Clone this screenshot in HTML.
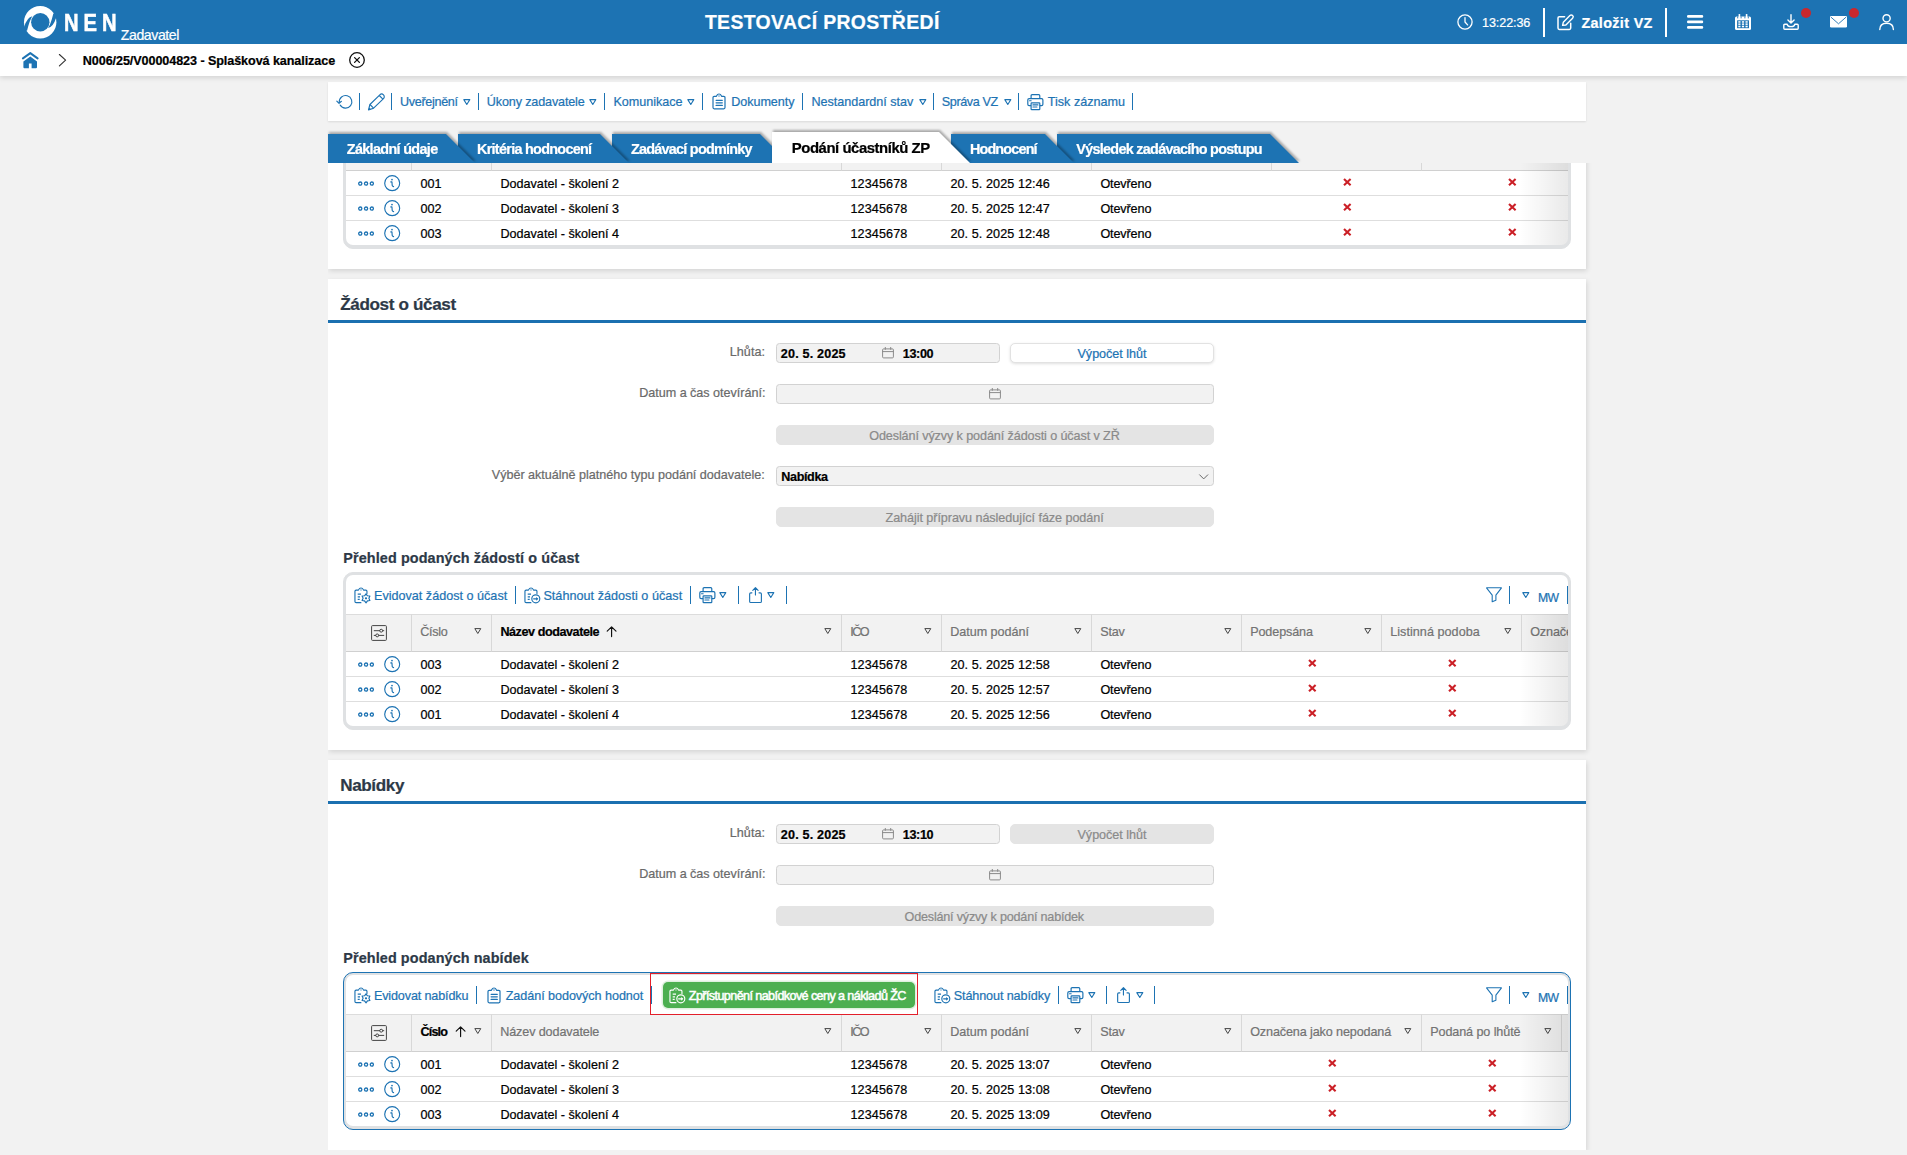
<!DOCTYPE html>
<html lang="cs">
<head>
<meta charset="utf-8">
<title>NEN – Zadavatel – Podání účastníků ZP</title>
<style>
*{box-sizing:border-box;margin:0;padding:0}
html,body{width:1907px;height:1155px;overflow:hidden}
body{position:relative;background:#f2f2f2;font:400 12.6px/1 "Liberation Sans",sans-serif;color:#000}
h1,h2,h3{font-weight:700;margin:0}
button{font:inherit;border:0;background:none;display:block;text-align:left}
.t{position:absolute;line-height:1;white-space:pre;font-family:"Liberation Sans",sans-serif;-webkit-text-stroke:.22px currentColor}
.f-nen{-webkit-text-stroke:.55px currentColor}
.f-gb{-webkit-text-stroke:.5px currentColor}
.i{position:absolute;display:block;overflow:visible}
.a{position:absolute}
.sep{position:absolute;display:block}
.f-r{font-weight:400;font-size:12.6px}
.f-b{font-weight:700;font-size:12.6px}
.f-mw{font-weight:400;font-size:12.2px}
.f-zad{font-weight:400;font-size:14.1px}
.f-nen{font-weight:700;font-size:24px}
.f-ttl{font-weight:700;font-size:19.4px}
.f-zvz{font-weight:700;font-size:14.4px}
.f-tab{font-weight:700;font-size:14.4px}
.f-taba{font-weight:700;font-size:14.9px}
.f-h2{font-weight:700;font-size:17.1px}
.f-h3{font-weight:700;font-size:14.4px}
.f-gb{font-weight:400;font-size:12.6px}
.top{position:absolute;left:0;top:0;width:1907px;height:44px;background:#1d73b3;z-index:5}
.crumbs{position:absolute;left:0;top:44px;width:1907px;height:32px;background:#fff;box-shadow:0 2px 5px rgba(0,0,0,.13);z-index:4}
.maintb{position:absolute;left:328px;top:82px;width:1258px;height:39px;background:#fff;box-shadow:0 1px 2px rgba(0,0,0,.10)}
.tabs{position:absolute;left:328px;top:128px;width:1258px;height:35px;z-index:3}
.tabw{position:absolute;filter:drop-shadow(1.5px -1.5px 1px rgba(0,0,0,.30))}
.tab{display:block;position:relative;background:#1d73b3}
.tab.act{background:#fff}
.scroll{position:absolute;left:328px;top:163px;width:1266px;height:987px;overflow:hidden}
.panel{position:absolute;left:0;width:1258px;background:#fff;box-shadow:1px 2px 5px rgba(0,0,0,.125)}
.rule{background:#1b70b0}
.inp{background:#f2f2f2;border:1px solid #d2d2d2;border-radius:3.5px}
.inp>.t,.inp>.i,.btn>.t{margin:-1px 0 0 -1px}
.btn{background:#fff;border:1px solid #e2e2e2;border-radius:5px;box-shadow:0 1px 3px rgba(0,0,0,.13)}
.btn.dis{background:#e4e4e4;border-color:#e4e4e4;box-shadow:none}
.frame{position:absolute;left:15px;width:1228px;height:157.6px;border:1px solid #dfe1e3;padding:2px;border-radius:10px;background:#dfe1e3}
.frame.focus{border-color:#1d73b3}
.finner{position:relative;width:1222px;height:151px;background:#fff;border-radius:7px;overflow:hidden}
.gtb{position:relative;height:39px}
.gscroll{position:relative;width:1222px;height:112px;overflow:hidden}
.grid{border-collapse:separate;border-spacing:0;table-layout:fixed}
.grid th,.grid td{position:relative;padding:0;font-weight:400}
.grid th{height:38px;background:#f2f2f2;border-top:1px solid #dcdcdc;border-bottom:1px solid #d0d0d0;border-right:1px solid #d8d8d8}
.grid td{height:25px;border-bottom:1px solid #dedede}
.grid tr:last-child td{border-bottom:0;height:24px}
.fade{position:absolute;right:0;top:0;width:48px;height:112px;background:linear-gradient(90deg,rgba(0,0,0,0),rgba(0,0,0,.088))}
.gbtn{background:#4caf50;border-radius:5px;box-shadow:0 0 0 1.5px rgba(76,175,80,.18)}
.mark{border:1px solid #e3202b;z-index:2}

</style>
</head>
<body>
<header class="top">
<svg class="i" style="left:23.7px;top:5.7px" width="32.4" height="32.4" viewBox="0 0 32.4 32.4"><circle cx="16.2" cy="16.2" r="16.2" fill="#fff"/><path d="M0 21.3Q3.2 11 8.4 10.3Q5.7 13.85 3.05 24.8L0.6 24.6Z" fill="#1d73b3"/><path d="M32.40 11.10Q29.20 21.40 24.00 22.10Q26.70 18.55 29.35 7.60L31.80 7.80Z" fill="#1d73b3"/><circle cx="16.3" cy="16.2" r="9.2" fill="#1d73b3"/></svg>
<span class="t f-nen" style="left:64.3px;top:11px;letter-spacing:5.974px;color:#fff;transform:scaleX(0.84);transform-origin:0 0">NEN</span>
<span class="t f-zad" style="left:120.8px;top:28px;letter-spacing:-0.413px;color:#fff">Zadavatel</span>
<h1 class="t f-ttl" style="left:704.9px;top:13px;letter-spacing:0.372px;color:#fff">TESTOVACÍ PROSTŘEDÍ</h1>
<svg class="i" style="left:1457.4px;top:14.2px" width="16.0" height="16.0" viewBox="0 0 16 16"><circle cx="8" cy="8" r="7.1" fill="none" stroke="#fff" stroke-width="1.3"/><path d="M8 3.6V8L10.6 10.9" fill="none" stroke="#fff" stroke-width="1.3" stroke-linecap="round" stroke-linejoin="round"/></svg>
<span class="t f-r" style="left:1482.1px;top:17px;letter-spacing:-0.119px;color:#fff">13:22:36</span>
<i class="sep" style="left:1543.0px;top:8.2px;height:28.6px;width:2.0px;background:#fff"></i>
<svg class="i" style="left:1557.0px;top:13.8px" width="17.0" height="16.5" viewBox="0 0 17 16.5"><path d="M7.6 2.7H2.3Q1 2.7 1 4V14.1Q1 15.4 2.3 15.4H12.4Q13.7 15.4 13.7 14.1V9.2" fill="none" stroke="#fff" stroke-width="1.5" stroke-linecap="round"/><path d="M5.6 11.4L6.3 8.3L12.9 1.6A1.9 1.9 0 0 1 15.6 4.3L8.9 11Z" fill="none" stroke="#fff" stroke-width="1.4" stroke-linejoin="round"/></svg>
<span class="t f-zvz" style="left:1581.4px;top:16px;letter-spacing:0.337px;color:#fff">Založit VZ</span>
<i class="sep" style="left:1665.0px;top:8.2px;height:28.6px;width:2.0px;background:#fff"></i>
<svg class="i" style="left:1686.9px;top:15.1px" width="16.2" height="14.0" viewBox="0 0 16.2 14"><rect x="0" y="0" width="16.2" height="2.8" rx="1.2" fill="#fff"/><rect x="0" y="5.5" width="16.2" height="2.8" rx="1.2" fill="#fff"/><rect x="0" y="11" width="16.2" height="2.8" rx="1.2" fill="#fff"/></svg>
<svg class="i" style="left:1735.0px;top:14.1px" width="16.0" height="16.0" viewBox="0 0 16 16"><rect x="0" y="2.4" width="16" height="13.6" rx="1.5" fill="#fff"/><rect x="3.6" y="0" width="1.6" height="4" rx="0.6" fill="#fff"/><rect x="10.8" y="0" width="1.6" height="4" rx="0.6" fill="#fff"/><path d="M2.7 2.4V4.4M6.1 2.4V4.4M9.9 2.4V4.4M13.3 2.4V4.4" stroke="#1d73b3" stroke-width="0.9"/><rect x="2.1" y="6.3" width="11.9" height="7.9" fill="#1d73b3"/><rect x="3.3" y="7.2" width="2.2" height="1.5" fill="#fff"/><rect x="6.9" y="7.2" width="2.2" height="1.5" fill="#fff"/><rect x="10.5" y="7.2" width="2.2" height="1.5" fill="#fff"/><rect x="3.3" y="9.4" width="2.2" height="1.5" fill="#fff"/><rect x="6.9" y="9.4" width="2.2" height="1.5" fill="#fff"/><rect x="10.5" y="9.4" width="2.2" height="1.5" fill="#fff"/><rect x="3.3" y="11.7" width="2.2" height="1.6" fill="#fff"/><rect x="6.9" y="11.7" width="2.2" height="1.6" fill="#fff"/><rect x="10.5" y="11.7" width="2.2" height="1.6" fill="#fff"/></svg>
<svg class="i" style="left:1782.8px;top:14.1px" width="16.0" height="16.0" viewBox="0 0 16 16"><path d="M8 0.7V8.8M4.9 5.9L8 9L11.1 5.9" fill="none" stroke="#fff" stroke-width="1.4" stroke-linecap="round" stroke-linejoin="round"/><path d="M4.2 10.3H1.8Q0.8 10.3 0.8 11.3V14.2Q0.8 15.2 1.8 15.2H14.2Q15.2 15.2 15.2 14.2V11.3Q15.2 10.3 14.2 10.3H11.8C11.5 12 10 12.6 8 12.6C6 12.6 4.5 12 4.2 10.3Z" fill="none" stroke="#fff" stroke-width="1.4" stroke-linejoin="round"/></svg>
<span class="i" style="left:1801.0px;top:8.0px;width:10.0px;height:10.0px;border-radius:50%;background:#c9282d"></span>
<svg class="i" style="left:1830.0px;top:16.0px" width="17.0" height="11.6" viewBox="0 0 17 11.6"><rect x="0" y="0" width="17" height="11.6" rx="1.3" fill="#fff"/><path d="M1 1.2L8.5 7.8L16 1.2" fill="none" stroke="#1d73b3" stroke-width="0.9" stroke-linejoin="round"/></svg>
<span class="i" style="left:1849.0px;top:8.0px;width:10.0px;height:10.0px;border-radius:50%;background:#c9282d"></span>
<svg class="i" style="left:1879.0px;top:14.1px" width="15.2" height="16.0" viewBox="0 0 15.2 16"><circle cx="7.6" cy="4.3" r="3.6" fill="none" stroke="#fff" stroke-width="1.4"/><path d="M0.8 15.6C0.8 11.4 3.6 9.3 7.6 9.3C11.6 9.3 14.4 11.4 14.4 15.6" fill="none" stroke="#fff" stroke-width="1.4" stroke-linecap="round"/></svg>
</header>
<nav class="crumbs">
<svg class="i" style="left:22.0px;top:7.8px" width="16.5" height="16.5" viewBox="0 0 16.5 16.5"><path d="M0.9 6.4L8.3 1.1L15.6 6.4" fill="none" stroke="#1d73b3" stroke-width="2" stroke-linecap="round" stroke-linejoin="round"/><path d="M8.3 4.6L15 9.6V15.2Q15 16.2 14 16.2H9.6V11.5H6.9V16.2H2.4Q1.4 16.2 1.4 15.2V9.6Z" fill="#1d73b3"/></svg>
<svg class="i" style="left:59.0px;top:9.9px" width="7.2" height="12.4" viewBox="0 0 7.2 12.4"><path d="M0.4 0.5L6.6 6.2L0.4 11.9" fill="none" stroke="#333" stroke-width="1.15" stroke-linecap="round" stroke-linejoin="round"/></svg>
<span class="t f-b" style="left:82.8px;top:11px;letter-spacing:-0.081px;color:#000">N006/25/V00004823 - Splašková kanalizace</span>
<svg class="i" style="left:348.8px;top:7.9px" width="16.0" height="16.0" viewBox="0 0 16 16"><circle cx="8" cy="8" r="7.3" fill="none" stroke="#111" stroke-width="1.3"/><path d="M5.6 5.6L10.4 10.4M10.4 5.6L5.6 10.4" stroke="#111" stroke-width="1.3" stroke-linecap="round"/></svg>
</nav>
<div class="maintb" role="toolbar">
<svg class="i" style="left:7.5px;top:12.0px" width="17.0" height="16.0" viewBox="0 0 17 16"><path d="M4.2 11.1A6.3 6.3 0 1 0 3.3 8.4" fill="none" stroke="#1d73b3" stroke-width="1.15" stroke-linecap="round"/><path d="M0.8 7.1L3.05 9.4L5.4 7.3" fill="none" stroke="#1d73b3" stroke-width="1.15" stroke-linecap="round" stroke-linejoin="round"/></svg>
<i class="sep" style="left:30.7px;top:11.2px;height:17.0px;width:1.2px;background:#1d73b3"></i>
<svg class="i" style="left:40.0px;top:11.6px" width="16.6" height="16.6" viewBox="0 0 16.6 16.6"><path d="M0.5 15.9L1.92 10.5L11.82 0.9A2.6 2.6 0 0 1 15.5 4.58L5.6 14.2Z" fill="none" stroke="#1d73b3" stroke-width="1.15" stroke-linejoin="round"/><path d="M1.92 10.5L5.6 14.2M11.3 1.5L14.9 5.1" fill="none" stroke="#1d73b3" stroke-width="1.1"/><path d="M0.5 15.9L1.1 13.4L3 15.3Z" fill="#1d73b3"/></svg>
<i class="sep" style="left:62.8px;top:11.2px;height:17.0px;width:1.2px;background:#1d73b3"></i>
<span class="t f-r" style="left:72.0px;top:14px;letter-spacing:-0.323px;color:#1d73b3">Uveřejnění</span>
<svg class="i" style="left:135.3px;top:16.6px" width="7.6" height="6.2" viewBox="0 0 7.6 6.2"><path d="M0.8 0.6H6.8L3.8 5.5Z" fill="none" stroke="#1d73b3" stroke-width="1.1" stroke-linejoin="round"/></svg>
<i class="sep" style="left:149.8px;top:11.2px;height:17.0px;width:1.2px;background:#1d73b3"></i>
<span class="t f-r" style="left:158.8px;top:14px;letter-spacing:-0.142px;color:#1d73b3">Úkony zadavatele</span>
<svg class="i" style="left:261.4px;top:16.6px" width="7.6" height="6.2" viewBox="0 0 7.6 6.2"><path d="M0.8 0.6H6.8L3.8 5.5Z" fill="none" stroke="#1d73b3" stroke-width="1.1" stroke-linejoin="round"/></svg>
<i class="sep" style="left:275.8px;top:11.2px;height:17.0px;width:1.2px;background:#1d73b3"></i>
<span class="t f-r" style="left:285.5px;top:14px;letter-spacing:-0.035px;color:#1d73b3">Komunikace</span>
<svg class="i" style="left:359.4px;top:16.6px" width="7.6" height="6.2" viewBox="0 0 7.6 6.2"><path d="M0.8 0.6H6.8L3.8 5.5Z" fill="none" stroke="#1d73b3" stroke-width="1.1" stroke-linejoin="round"/></svg>
<i class="sep" style="left:373.8px;top:11.2px;height:17.0px;width:1.2px;background:#1d73b3"></i>
<svg class="i" style="left:384.4px;top:11.4px" width="14.0" height="17.0" viewBox="0 0 14 17"><path d="M4.3 3.4H2.2Q1 3.4 1 4.6V14.6Q1 15.8 2.2 15.8H11.8Q13 15.8 13 14.6V4.6Q13 3.4 11.8 3.4H9.7C9.2 3.4 9.3 1 7 1C4.7 1 4.8 3.4 4.3 3.4Z" fill="none" stroke="#1d73b3" stroke-width="1.2" stroke-linejoin="round"/><circle cx="7" cy="3" r="0.65" fill="#1d73b3"/><path d="M4.1 7.3H10.3M4.1 9.85H10.3M4.1 12.4H10.3" stroke="#1d73b3" stroke-width="1.25" stroke-linecap="round"/></svg>
<span class="t f-r" style="left:403.3px;top:14px;letter-spacing:-0.063px;color:#1d73b3">Dokumenty</span>
<i class="sep" style="left:473.7px;top:11.2px;height:17.0px;width:1.2px;background:#1d73b3"></i>
<span class="t f-r" style="left:483.4px;top:14px;letter-spacing:-0.014px;color:#1d73b3">Nestandardní stav</span>
<svg class="i" style="left:590.7px;top:16.6px" width="7.6" height="6.2" viewBox="0 0 7.6 6.2"><path d="M0.8 0.6H6.8L3.8 5.5Z" fill="none" stroke="#1d73b3" stroke-width="1.1" stroke-linejoin="round"/></svg>
<i class="sep" style="left:604.8px;top:11.2px;height:17.0px;width:1.2px;background:#1d73b3"></i>
<span class="t f-r" style="left:613.8px;top:14px;letter-spacing:-0.388px;color:#1d73b3">Správa VZ</span>
<svg class="i" style="left:675.6px;top:16.6px" width="7.6" height="6.2" viewBox="0 0 7.6 6.2"><path d="M0.8 0.6H6.8L3.8 5.5Z" fill="none" stroke="#1d73b3" stroke-width="1.1" stroke-linejoin="round"/></svg>
<i class="sep" style="left:690.0px;top:11.2px;height:17.0px;width:1.2px;background:#1d73b3"></i>
<svg class="i" style="left:698.7px;top:11.7px" width="16.7" height="16.5" viewBox="0 0 16.7 16.5"><path d="M4.1 4.5V1.7Q4.1 0.7 5.1 0.7H11.8Q12.8 0.7 12.8 1.7V4.5" fill="none" stroke="#1d73b3" stroke-width="1.2"/><path d="M4.1 11.6H2.1Q0.8 11.6 0.8 10.3V6Q0.8 4.7 2.1 4.7H14.6Q15.9 4.7 15.9 6V10.3Q15.9 11.6 14.6 11.6H12.8" fill="none" stroke="#1d73b3" stroke-width="1.2"/><rect x="4.1" y="8.9" width="8.7" height="6.8" rx="0.7" fill="none" stroke="#1d73b3" stroke-width="1.2"/><path d="M2.5 6.8H4.2M5.9 10.9H11M5.9 13H10" stroke="#1d73b3" stroke-width="1.05" stroke-linecap="round"/></svg>
<span class="t f-r" style="left:719.8px;top:14px;letter-spacing:-0.002px;color:#1d73b3">Tisk záznamu</span>
<i class="sep" style="left:803.9px;top:11.2px;height:17.0px;width:1.2px;background:#1d73b3"></i>
</div>
<div class="tabs" role="tablist">
<div class="tabw" style="left:0px;top:6px;z-index:10"><a class="tab" style="width:147px;height:29px;clip-path:polygon(0 0,118px 0,100% 100%,0 100%)"><span class="t f-tab" style="left:18.8px;top:8px;letter-spacing:-0.659px;color:#fff">Základní údaje</span></a></div>
<div class="tabw" style="left:130px;top:6px;z-index:9"><a class="tab" style="width:171px;height:29px;clip-path:polygon(0 0,142px 0,100% 100%,0 100%)"><span class="t f-tab" style="left:19.0px;top:8px;letter-spacing:-0.708px;color:#fff">Kritéria hodnocení</span></a></div>
<div class="tabw" style="left:284px;top:6px;z-index:8"><a class="tab" style="width:177px;height:29px;clip-path:polygon(0 0,148px 0,100% 100%,0 100%)"><span class="t f-tab" style="left:19.0px;top:8px;letter-spacing:-0.748px;color:#fff">Zadávací podmínky</span></a></div>
<div class="tabw" style="left:444px;top:4px;z-index:20"><a class="tab act" style="width:198px;height:31px;clip-path:polygon(0 0,167px 0,100% 100%,0 100%)"><span class="t f-taba" style="left:19.8px;top:9px;letter-spacing:-0.447px;color:#000">Podání účastníků ZP</span></a></div>
<div class="tabw" style="left:623px;top:6px;z-index:6"><a class="tab" style="width:123px;height:29px;clip-path:polygon(0 0,94px 0,100% 100%,0 100%)"><span class="t f-tab" style="left:18.9px;top:8px;letter-spacing:-0.832px;color:#fff">Hodnocení</span></a></div>
<div class="tabw" style="left:729px;top:6px;z-index:5"><a class="tab" style="width:242px;height:29px;clip-path:polygon(0 0,213px 0,100% 100%,0 100%)"><span class="t f-tab" style="left:19.3px;top:8px;letter-spacing:-0.709px;color:#fff">Výsledek zadávacího postupu</span></a></div>
</div>
<main class="scroll">
<section class="panel" style="top:-365.0px;height:471.0px">
<h2 class="t f-h2" style="left:12.2px;top:17px;color:#2d3947">Předběžná nabídka</h2>
<div class="a rule" style="left:0.0px;top:41.0px;width:1258.0px;height:3.0px"></div>
<label class="t f-r" style="left:401.7px;top:67px;letter-spacing:0.077px;color:#6a6a6a">Lhůta:</label>
<div class="a inp" style="left:448.0px;top:64.4px;width:223.6px;height:20.0px"><span class="t f-b" style="left:4.8px;top:4.60px;letter-spacing:0.177px;color:#000">20. 5. 2025</span>
<svg class="i" style="left:106.0px;top:3.9px" width="12.0" height="11.5" viewBox="0 0 12 11.5"><rect x="0.6" y="1.9" width="10.8" height="9" rx="1" fill="none" stroke="#8a8a8a" stroke-width="1"/><path d="M0.6 4.6H11.4M3.3 0.4V2.4M8.7 0.4V2.4" stroke="#8a8a8a" stroke-width="1" stroke-linecap="round"/></svg>
<span class="t f-b" style="left:126.8px;top:4.60px;letter-spacing:-0.355px;color:#000">12:50</span></div>
<button class="a btn" style="left:682.3px;top:64.4px;width:203.3px;height:19.4px"><span class="t f-r" style="left:67.2px;top:4.60px;letter-spacing:-0.028px;color:#1d73b3">Výpočet lhůt</span></button>
<label class="t f-r" style="left:311.2px;top:108px;letter-spacing:-0.024px;color:#6a6a6a">Datum a čas otevírání:</label>
<div class="a inp" style="left:448.0px;top:105.4px;width:437.6px;height:20.0px"><svg class="i" style="left:213.0px;top:3.9px" width="12.0" height="11.5" viewBox="0 0 12 11.5"><rect x="0.6" y="1.9" width="10.8" height="9" rx="1" fill="none" stroke="#8a8a8a" stroke-width="1"/><path d="M0.6 4.6H11.4M3.3 0.4V2.4M8.7 0.4V2.4" stroke="#8a8a8a" stroke-width="1" stroke-linecap="round"/></svg></div>
<button class="a btn dis" style="left:448.0px;top:146.4px;width:437.6px;height:20.0px"><span class="t f-r" style="left:93.2px;top:4.60px;color:#8a8a8a">Odeslání výzvy k podání předběžných nabídek</span></button>
<label class="t f-r" style="left:163.8px;top:190px;letter-spacing:-0.017px;color:#6a6a6a">Výběr aktuálně platného typu podání dodavatele:</label>
<div class="a inp" style="left:448.0px;top:187.4px;width:437.6px;height:20.0px"><span class="t f-b" style="left:5.3px;top:4.60px;letter-spacing:-0.367px;color:#000">Nabídka</span>
<svg class="i" style="left:422.6px;top:7.4px" width="9.4" height="5.8" viewBox="0 0 9.4 5.8"><path d="M0.6 0.8L4.7 4.9L8.8 0.8" fill="none" stroke="#666" stroke-width="1" stroke-linecap="round" stroke-linejoin="round"/></svg></div>
<button class="a btn dis" style="left:448.0px;top:228.4px;width:437.6px;height:20.0px"><span class="t f-r" style="left:109.5px;top:4.60px;letter-spacing:-0.060px;color:#8a8a8a">Zahájit přípravu následující fáze podání</span></button>
<h3 class="t f-h3" style="left:15.3px;top:272px;color:#2d3947">Přehled podaných předběžných nabídek</h3>
<div class="frame" style="top:293.4px"><div class="finner"><div class="gtb" role="toolbar"><svg class="i" style="left:7.6px;top:11.2px" width="17.0" height="17.0" viewBox="0 0 17 17"><path d="M6.9 15.65H2.1Q0.95 15.65 0.95 14.5V4.3Q0.95 3.15 2.1 3.15H4.3C4.8 3.15 4.7 0.95 7 0.95C9.3 0.95 9.2 3.15 9.7 3.15H11.8Q12.95 3.15 12.95 4.3V6.5" fill="none" stroke="#1d73b3" stroke-width="1.15" stroke-linecap="round" stroke-linejoin="round"/><circle cx="7" cy="2.9" r="0.6" fill="#1d73b3"/><path d="M3.7 7.1H7M3.7 9.8H6M3.7 12.4H5.7" stroke="#1d73b3" stroke-width="1.25" stroke-linecap="butt"/><path d="M12.00 6.80L13.45 8.79L15.90 9.05L14.90 11.30L15.90 13.55L13.45 13.81L12.00 15.80L10.55 13.81L8.10 13.55L9.10 11.30L8.10 9.05L10.55 8.79Z" fill="none" stroke="#1d73b3" stroke-width="1.15" stroke-linejoin="round"/><circle cx="12.0" cy="11.3" r="1.15" fill="#1d73b3"/></svg>
<span class="t f-r" style="left:28.0px;top:14.60px;color:#1d73b3">Evidovat předběžnou nabídku</span>
<svg class="i" style="left:1139.9px;top:11.9px" width="16.0" height="15.3" viewBox="0 0 16 15.3"><path d="M0.9 0.7H15.1Q15.6 0.7 15.3 1.2L9.9 8.2V13.2L6.2 14.7V8.2L0.7 1.2Q0.4 0.7 0.9 0.7Z" fill="none" stroke="#1d73b3" stroke-width="1.1" stroke-linejoin="round"/></svg>
<i class="sep" style="left:1163.0px;top:10.8px;height:17.4px;width:1.2px;background:#1d73b3"></i>
<svg class="i" style="left:1175.8px;top:16.8px" width="7.6" height="6.2" viewBox="0 0 7.6 6.2"><path d="M0.8 0.6H6.8L3.8 5.5Z" fill="none" stroke="#1d73b3" stroke-width="1.1" stroke-linejoin="round"/></svg>
<span class="t f-mw" style="left:1192.0px;top:16.60px;letter-spacing:-0.656px;color:#1d73b3">MW</span>
<i class="sep" style="left:1220.6px;top:10.8px;height:17.4px;width:1.6px;background:#1d73b3"></i></div><div class="gscroll"><table class="grid" style="width:1256px"><thead><tr><th style="width:66px"><svg class="i" style="left:24.9px;top:9.6px" width="16.0" height="16.0" viewBox="0 0 16 16"><rect x="0.6" y="0.6" width="14.8" height="14.8" rx="0.9" fill="none" stroke="#444" stroke-width="1"/><path d="M3.2 5.7H8.6M11.8 5.7H12.8M3.2 10.4H4.6M7.8 10.4H12.8" stroke="#444" stroke-width="1" stroke-linecap="round"/><circle cx="10.2" cy="5.7" r="1.45" fill="none" stroke="#444" stroke-width="1"/><circle cx="6.2" cy="10.4" r="1.45" fill="none" stroke="#444" stroke-width="1"/></svg></th><th style="width:80px"><span class="t f-b" style="left:8.4px;top:10.60px;letter-spacing:-0.799px;color:#000">Číslo</span>
<svg class="i" style="left:42.6px;top:10.2px" width="11.2" height="11.4" viewBox="0 0 11.2 11.4"><path d="M5.6 10.6V0.8M1.2 5.2L5.6 0.8L10 5.2" fill="none" stroke="#111" stroke-width="1.15" stroke-linecap="round" stroke-linejoin="round"/></svg>
<svg class="i" style="left:62.4px;top:12.6px" width="7.6" height="6.2" viewBox="0 0 7.6 6.2"><path d="M0.8 0.6H6.8L3.8 5.5Z" fill="none" stroke="#444" stroke-width="1" stroke-linejoin="round"/></svg></th><th style="width:350px"><span class="t f-r" style="left:8.2px;top:10.60px;letter-spacing:-0.109px;color:#737373">Název dodavatele</span>
<svg class="i" style="left:332.4px;top:12.6px" width="7.6" height="6.2" viewBox="0 0 7.6 6.2"><path d="M0.8 0.6H6.8L3.8 5.5Z" fill="none" stroke="#444" stroke-width="1" stroke-linejoin="round"/></svg></th><th style="width:100px"><span class="t f-r" style="left:8.2px;top:10.60px;letter-spacing:-1.495px;color:#737373">IČO</span>
<svg class="i" style="left:82.4px;top:12.6px" width="7.6" height="6.2" viewBox="0 0 7.6 6.2"><path d="M0.8 0.6H6.8L3.8 5.5Z" fill="none" stroke="#444" stroke-width="1" stroke-linejoin="round"/></svg></th><th style="width:150px"><span class="t f-r" style="left:8.2px;top:10.60px;letter-spacing:-0.030px;color:#737373">Datum podání</span>
<svg class="i" style="left:132.4px;top:12.6px" width="7.6" height="6.2" viewBox="0 0 7.6 6.2"><path d="M0.8 0.6H6.8L3.8 5.5Z" fill="none" stroke="#444" stroke-width="1" stroke-linejoin="round"/></svg></th><th style="width:180px"><span class="t f-r" style="left:8.2px;top:10.60px;letter-spacing:-0.201px;color:#737373">Stav</span>
<svg class="i" style="left:162.4px;top:12.6px" width="7.6" height="6.2" viewBox="0 0 7.6 6.2"><path d="M0.8 0.6H6.8L3.8 5.5Z" fill="none" stroke="#444" stroke-width="1" stroke-linejoin="round"/></svg></th><th style="width:150px"><span class="t f-r" style="left:8.2px;top:10.60px;letter-spacing:-2.550px;color:#737373">Označena jako nepodaná</span>
<svg class="i" style="left:132.4px;top:12.6px" width="7.6" height="6.2" viewBox="0 0 7.6 6.2"><path d="M0.8 0.6H6.8L3.8 5.5Z" fill="none" stroke="#444" stroke-width="1" stroke-linejoin="round"/></svg></th><th style="width:180px"><span class="t f-r" style="left:8.2px;top:10.60px;letter-spacing:-0.125px;color:#737373">Podaná po lhůtě</span>
<svg class="i" style="left:162.4px;top:12.6px" width="7.6" height="6.2" viewBox="0 0 7.6 6.2"><path d="M0.8 0.6H6.8L3.8 5.5Z" fill="none" stroke="#444" stroke-width="1" stroke-linejoin="round"/></svg></th></tr></thead><tbody><tr><td><svg class="i" style="left:12.0px;top:9.5px" width="16.2" height="5.2" viewBox="0 0 16.2 5.2"><circle cx="2.25" cy="2.6" r="1.6" fill="none" stroke="#1d73b3" stroke-width="1.3"/><circle cx="8.05" cy="2.6" r="1.6" fill="none" stroke="#1d73b3" stroke-width="1.3"/><circle cx="13.85" cy="2.6" r="1.6" fill="none" stroke="#1d73b3" stroke-width="1.3"/></svg>
<svg class="i" style="left:37.8px;top:3.9px" width="16.4" height="16.4" viewBox="0 0 16.4 16.4"><circle cx="8.2" cy="8.2" r="7.5" fill="none" stroke="#1d73b3" stroke-width="1.15"/><circle cx="8" cy="4.6" r="0.85" fill="#1d73b3"/><path d="M6.8 6.95H7.95L8.2 10.4Q8.3 11.3 9.6 11.6" fill="none" stroke="#1d73b3" stroke-width="1.15" stroke-linecap="round" stroke-linejoin="round"/></svg></td><td><span class="t f-r" style="left:8.4px;top:6.60px;letter-spacing:-0.008px;color:#000">001</span></td><td><span class="t f-r" style="left:8.4px;top:6.60px;letter-spacing:0.014px;color:#000">Dodavatel - školení 2</span></td><td><span class="t f-r" style="left:8.4px;top:6.60px;letter-spacing:0.136px;color:#000">12345678</span></td><td><span class="t f-r" style="left:8.4px;top:6.60px;letter-spacing:0.085px;color:#000">20. 5. 2025 12:46</span></td><td><span class="t f-r" style="left:8.4px;top:6.60px;letter-spacing:-0.116px;color:#000">Otevřeno</span></td><td><svg class="i" style="left:71.1px;top:6.9px" width="8.6" height="8.3" viewBox="0 0 8.6 8.3"><path d="M1 1L7.6 7.3M7.6 1L1 7.3" stroke="#cb2027" stroke-width="2.1" stroke-linecap="butt"/></svg></td><td><svg class="i" style="left:86.1px;top:6.9px" width="8.6" height="8.3" viewBox="0 0 8.6 8.3"><path d="M1 1L7.6 7.3M7.6 1L1 7.3" stroke="#cb2027" stroke-width="2.1" stroke-linecap="butt"/></svg></td></tr><tr><td><svg class="i" style="left:12.0px;top:9.5px" width="16.2" height="5.2" viewBox="0 0 16.2 5.2"><circle cx="2.25" cy="2.6" r="1.6" fill="none" stroke="#1d73b3" stroke-width="1.3"/><circle cx="8.05" cy="2.6" r="1.6" fill="none" stroke="#1d73b3" stroke-width="1.3"/><circle cx="13.85" cy="2.6" r="1.6" fill="none" stroke="#1d73b3" stroke-width="1.3"/></svg>
<svg class="i" style="left:37.8px;top:3.9px" width="16.4" height="16.4" viewBox="0 0 16.4 16.4"><circle cx="8.2" cy="8.2" r="7.5" fill="none" stroke="#1d73b3" stroke-width="1.15"/><circle cx="8" cy="4.6" r="0.85" fill="#1d73b3"/><path d="M6.8 6.95H7.95L8.2 10.4Q8.3 11.3 9.6 11.6" fill="none" stroke="#1d73b3" stroke-width="1.15" stroke-linecap="round" stroke-linejoin="round"/></svg></td><td><span class="t f-r" style="left:8.4px;top:6.60px;letter-spacing:-0.008px;color:#000">002</span></td><td><span class="t f-r" style="left:8.4px;top:6.60px;letter-spacing:0.014px;color:#000">Dodavatel - školení 3</span></td><td><span class="t f-r" style="left:8.4px;top:6.60px;letter-spacing:0.136px;color:#000">12345678</span></td><td><span class="t f-r" style="left:8.4px;top:6.60px;letter-spacing:0.085px;color:#000">20. 5. 2025 12:47</span></td><td><span class="t f-r" style="left:8.4px;top:6.60px;letter-spacing:-0.116px;color:#000">Otevřeno</span></td><td><svg class="i" style="left:71.1px;top:6.9px" width="8.6" height="8.3" viewBox="0 0 8.6 8.3"><path d="M1 1L7.6 7.3M7.6 1L1 7.3" stroke="#cb2027" stroke-width="2.1" stroke-linecap="butt"/></svg></td><td><svg class="i" style="left:86.1px;top:6.9px" width="8.6" height="8.3" viewBox="0 0 8.6 8.3"><path d="M1 1L7.6 7.3M7.6 1L1 7.3" stroke="#cb2027" stroke-width="2.1" stroke-linecap="butt"/></svg></td></tr><tr><td><svg class="i" style="left:12.0px;top:9.5px" width="16.2" height="5.2" viewBox="0 0 16.2 5.2"><circle cx="2.25" cy="2.6" r="1.6" fill="none" stroke="#1d73b3" stroke-width="1.3"/><circle cx="8.05" cy="2.6" r="1.6" fill="none" stroke="#1d73b3" stroke-width="1.3"/><circle cx="13.85" cy="2.6" r="1.6" fill="none" stroke="#1d73b3" stroke-width="1.3"/></svg>
<svg class="i" style="left:37.8px;top:3.9px" width="16.4" height="16.4" viewBox="0 0 16.4 16.4"><circle cx="8.2" cy="8.2" r="7.5" fill="none" stroke="#1d73b3" stroke-width="1.15"/><circle cx="8" cy="4.6" r="0.85" fill="#1d73b3"/><path d="M6.8 6.95H7.95L8.2 10.4Q8.3 11.3 9.6 11.6" fill="none" stroke="#1d73b3" stroke-width="1.15" stroke-linecap="round" stroke-linejoin="round"/></svg></td><td><span class="t f-r" style="left:8.4px;top:6.60px;letter-spacing:-0.008px;color:#000">003</span></td><td><span class="t f-r" style="left:8.4px;top:6.60px;letter-spacing:0.014px;color:#000">Dodavatel - školení 4</span></td><td><span class="t f-r" style="left:8.4px;top:6.60px;letter-spacing:0.136px;color:#000">12345678</span></td><td><span class="t f-r" style="left:8.4px;top:6.60px;letter-spacing:0.085px;color:#000">20. 5. 2025 12:48</span></td><td><span class="t f-r" style="left:8.4px;top:6.60px;letter-spacing:-0.116px;color:#000">Otevřeno</span></td><td><svg class="i" style="left:71.1px;top:6.9px" width="8.6" height="8.3" viewBox="0 0 8.6 8.3"><path d="M1 1L7.6 7.3M7.6 1L1 7.3" stroke="#cb2027" stroke-width="2.1" stroke-linecap="butt"/></svg></td><td><svg class="i" style="left:86.1px;top:6.9px" width="8.6" height="8.3" viewBox="0 0 8.6 8.3"><path d="M1 1L7.6 7.3M7.6 1L1 7.3" stroke="#cb2027" stroke-width="2.1" stroke-linecap="butt"/></svg></td></tr></tbody></table><div class="fade"></div></div></div></div>
</section>
<section class="panel" style="top:116.0px;height:471.0px">
<h2 class="t f-h2" style="left:12.2px;top:17px;letter-spacing:-0.356px;color:#2d3947">Žádost o účast</h2>
<div class="a rule" style="left:0.0px;top:41.0px;width:1258.0px;height:3.0px"></div>
<label class="t f-r" style="left:401.7px;top:67px;letter-spacing:0.077px;color:#6a6a6a">Lhůta:</label>
<div class="a inp" style="left:448.0px;top:64.4px;width:223.6px;height:20.0px"><span class="t f-b" style="left:4.8px;top:4.60px;letter-spacing:0.177px;color:#000">20. 5. 2025</span>
<svg class="i" style="left:106.0px;top:3.9px" width="12.0" height="11.5" viewBox="0 0 12 11.5"><rect x="0.6" y="1.9" width="10.8" height="9" rx="1" fill="none" stroke="#8a8a8a" stroke-width="1"/><path d="M0.6 4.6H11.4M3.3 0.4V2.4M8.7 0.4V2.4" stroke="#8a8a8a" stroke-width="1" stroke-linecap="round"/></svg>
<span class="t f-b" style="left:126.8px;top:4.60px;letter-spacing:-0.355px;color:#000">13:00</span></div>
<button class="a btn" style="left:682.3px;top:64.4px;width:203.3px;height:19.4px"><span class="t f-r" style="left:67.2px;top:4.60px;letter-spacing:-0.028px;color:#1d73b3">Výpočet lhůt</span></button>
<label class="t f-r" style="left:311.2px;top:108px;letter-spacing:-0.024px;color:#6a6a6a">Datum a čas otevírání:</label>
<div class="a inp" style="left:448.0px;top:105.4px;width:437.6px;height:20.0px"><svg class="i" style="left:213.0px;top:3.9px" width="12.0" height="11.5" viewBox="0 0 12 11.5"><rect x="0.6" y="1.9" width="10.8" height="9" rx="1" fill="none" stroke="#8a8a8a" stroke-width="1"/><path d="M0.6 4.6H11.4M3.3 0.4V2.4M8.7 0.4V2.4" stroke="#8a8a8a" stroke-width="1" stroke-linecap="round"/></svg></div>
<button class="a btn dis" style="left:448.0px;top:146.4px;width:437.6px;height:20.0px"><span class="t f-r" style="left:93.2px;top:4.60px;letter-spacing:-0.098px;color:#8a8a8a">Odeslání výzvy k podání žádosti o účast v ZŘ</span></button>
<label class="t f-r" style="left:163.8px;top:190px;letter-spacing:-0.017px;color:#6a6a6a">Výběr aktuálně platného typu podání dodavatele:</label>
<div class="a inp" style="left:448.0px;top:187.4px;width:437.6px;height:20.0px"><span class="t f-b" style="left:5.3px;top:4.60px;letter-spacing:-0.367px;color:#000">Nabídka</span>
<svg class="i" style="left:422.6px;top:7.4px" width="9.4" height="5.8" viewBox="0 0 9.4 5.8"><path d="M0.6 0.8L4.7 4.9L8.8 0.8" fill="none" stroke="#666" stroke-width="1" stroke-linecap="round" stroke-linejoin="round"/></svg></div>
<button class="a btn dis" style="left:448.0px;top:228.4px;width:437.6px;height:20.0px"><span class="t f-r" style="left:109.5px;top:4.60px;letter-spacing:-0.060px;color:#8a8a8a">Zahájit přípravu následující fáze podání</span></button>
<h3 class="t f-h3" style="left:15.3px;top:272px;letter-spacing:0.106px;color:#2d3947">Přehled podaných žádostí o účast</h3>
<div class="frame" style="top:293.4px"><div class="finner"><div class="gtb" role="toolbar"><svg class="i" style="left:7.6px;top:11.2px" width="17.0" height="17.0" viewBox="0 0 17 17"><path d="M6.9 15.65H2.1Q0.95 15.65 0.95 14.5V4.3Q0.95 3.15 2.1 3.15H4.3C4.8 3.15 4.7 0.95 7 0.95C9.3 0.95 9.2 3.15 9.7 3.15H11.8Q12.95 3.15 12.95 4.3V6.5" fill="none" stroke="#1d73b3" stroke-width="1.15" stroke-linecap="round" stroke-linejoin="round"/><circle cx="7" cy="2.9" r="0.6" fill="#1d73b3"/><path d="M3.7 7.1H7M3.7 9.8H6M3.7 12.4H5.7" stroke="#1d73b3" stroke-width="1.25" stroke-linecap="butt"/><path d="M12.00 6.80L13.45 8.79L15.90 9.05L14.90 11.30L15.90 13.55L13.45 13.81L12.00 15.80L10.55 13.81L8.10 13.55L9.10 11.30L8.10 9.05L10.55 8.79Z" fill="none" stroke="#1d73b3" stroke-width="1.15" stroke-linejoin="round"/><circle cx="12.0" cy="11.3" r="1.15" fill="#1d73b3"/></svg>
<span class="t f-r" style="left:28.0px;top:14.60px;letter-spacing:0.008px;color:#1d73b3">Evidovat žádost o účast</span>
<i class="sep" style="left:169.1px;top:10.8px;height:17.4px;width:1.2px;background:#1d73b3"></i>
<svg class="i" style="left:177.5px;top:11.2px" width="17.0" height="17.0" viewBox="0 0 17 17"><path d="M6.9 15.65H2.1Q0.95 15.65 0.95 14.5V4.3Q0.95 3.15 2.1 3.15H4.3C4.8 3.15 4.7 0.95 7 0.95C9.3 0.95 9.2 3.15 9.7 3.15H11.8Q12.95 3.15 12.95 4.3V6.5" fill="none" stroke="#1d73b3" stroke-width="1.15" stroke-linecap="round" stroke-linejoin="round"/><circle cx="7" cy="2.9" r="0.6" fill="#1d73b3"/><path d="M3.7 7.1H7M3.7 9.8H6M3.7 12.4H5.7" stroke="#1d73b3" stroke-width="1.25" stroke-linecap="butt"/><circle cx="11.8" cy="11.8" r="4" fill="none" stroke="#1d73b3" stroke-width="1.15"/><path d="M9.6 11.8H13.2" stroke="#1d73b3" stroke-width="1.15" stroke-linecap="round"/><path d="M12.2 9.9L14.3 11.8L12.2 13.7Z" fill="#1d73b3"/></svg>
<span class="t f-r" style="left:197.4px;top:14.60px;letter-spacing:0.038px;color:#1d73b3">Stáhnout žádosti o účast</span>
<i class="sep" style="left:343.9px;top:10.8px;height:17.4px;width:1.2px;background:#1d73b3"></i>
<svg class="i" style="left:353.1px;top:11.3px" width="16.7" height="16.5" viewBox="0 0 16.7 16.5"><path d="M4.1 4.5V1.7Q4.1 0.7 5.1 0.7H11.8Q12.8 0.7 12.8 1.7V4.5" fill="none" stroke="#1d73b3" stroke-width="1.2"/><path d="M4.1 11.6H2.1Q0.8 11.6 0.8 10.3V6Q0.8 4.7 2.1 4.7H14.6Q15.9 4.7 15.9 6V10.3Q15.9 11.6 14.6 11.6H12.8" fill="none" stroke="#1d73b3" stroke-width="1.2"/><rect x="4.1" y="8.9" width="8.7" height="6.8" rx="0.7" fill="none" stroke="#1d73b3" stroke-width="1.2"/><path d="M2.5 6.8H4.2M5.9 10.9H11M5.9 13H10" stroke="#1d73b3" stroke-width="1.05" stroke-linecap="round"/></svg>
<svg class="i" style="left:373.4px;top:16.8px" width="7.6" height="6.2" viewBox="0 0 7.6 6.2"><path d="M0.8 0.6H6.8L3.8 5.5Z" fill="none" stroke="#1d73b3" stroke-width="1.1" stroke-linejoin="round"/></svg>
<i class="sep" style="left:391.9px;top:10.8px;height:17.4px;width:1.2px;background:#1d73b3"></i>
<svg class="i" style="left:403.0px;top:11.4px" width="13.1" height="16.3" viewBox="0 0 13.1 16.3"><path d="M2.9 5.85H1.8Q0.65 5.85 0.65 7V14.4Q0.65 15.55 1.8 15.55H11.25Q12.4 15.55 12.4 14.4V7Q12.4 5.85 11.25 5.85H10" fill="none" stroke="#1d73b3" stroke-width="1.15" stroke-linecap="round"/><path d="M6.45 8V0.7M3.8 3.4L6.45 0.7L9.1 3.4" fill="none" stroke="#1d73b3" stroke-width="1.15" stroke-linecap="round" stroke-linejoin="round"/></svg>
<svg class="i" style="left:421.4px;top:16.8px" width="7.6" height="6.2" viewBox="0 0 7.6 6.2"><path d="M0.8 0.6H6.8L3.8 5.5Z" fill="none" stroke="#1d73b3" stroke-width="1.1" stroke-linejoin="round"/></svg>
<i class="sep" style="left:439.8px;top:10.8px;height:17.4px;width:1.2px;background:#1d73b3"></i>
<svg class="i" style="left:1139.9px;top:11.9px" width="16.0" height="15.3" viewBox="0 0 16 15.3"><path d="M0.9 0.7H15.1Q15.6 0.7 15.3 1.2L9.9 8.2V13.2L6.2 14.7V8.2L0.7 1.2Q0.4 0.7 0.9 0.7Z" fill="none" stroke="#1d73b3" stroke-width="1.1" stroke-linejoin="round"/></svg>
<i class="sep" style="left:1163.0px;top:10.8px;height:17.4px;width:1.2px;background:#1d73b3"></i>
<svg class="i" style="left:1175.8px;top:16.8px" width="7.6" height="6.2" viewBox="0 0 7.6 6.2"><path d="M0.8 0.6H6.8L3.8 5.5Z" fill="none" stroke="#1d73b3" stroke-width="1.1" stroke-linejoin="round"/></svg>
<span class="t f-mw" style="left:1192.0px;top:16.60px;letter-spacing:-0.656px;color:#1d73b3">MW</span>
<i class="sep" style="left:1220.6px;top:10.8px;height:17.4px;width:1.6px;background:#1d73b3"></i></div><div class="gscroll"><table class="grid" style="width:1356px"><thead><tr><th style="width:66px"><svg class="i" style="left:24.9px;top:9.6px" width="16.0" height="16.0" viewBox="0 0 16 16"><rect x="0.6" y="0.6" width="14.8" height="14.8" rx="0.9" fill="none" stroke="#444" stroke-width="1"/><path d="M3.2 5.7H8.6M11.8 5.7H12.8M3.2 10.4H4.6M7.8 10.4H12.8" stroke="#444" stroke-width="1" stroke-linecap="round"/><circle cx="10.2" cy="5.7" r="1.45" fill="none" stroke="#444" stroke-width="1"/><circle cx="6.2" cy="10.4" r="1.45" fill="none" stroke="#444" stroke-width="1"/></svg></th><th style="width:80px"><span class="t f-r" style="left:8.2px;top:10.60px;letter-spacing:-0.276px;color:#737373">Číslo</span>
<svg class="i" style="left:62.4px;top:12.6px" width="7.6" height="6.2" viewBox="0 0 7.6 6.2"><path d="M0.8 0.6H6.8L3.8 5.5Z" fill="none" stroke="#444" stroke-width="1" stroke-linejoin="round"/></svg></th><th style="width:350px"><span class="t f-b" style="left:8.4px;top:10.60px;letter-spacing:-0.434px;color:#000">Název dodavatele</span>
<svg class="i" style="left:114.2px;top:10.2px" width="11.2" height="11.4" viewBox="0 0 11.2 11.4"><path d="M5.6 10.6V0.8M1.2 5.2L5.6 0.8L10 5.2" fill="none" stroke="#111" stroke-width="1.15" stroke-linecap="round" stroke-linejoin="round"/></svg>
<svg class="i" style="left:332.4px;top:12.6px" width="7.6" height="6.2" viewBox="0 0 7.6 6.2"><path d="M0.8 0.6H6.8L3.8 5.5Z" fill="none" stroke="#444" stroke-width="1" stroke-linejoin="round"/></svg></th><th style="width:100px"><span class="t f-r" style="left:8.2px;top:10.60px;letter-spacing:-1.495px;color:#737373">IČO</span>
<svg class="i" style="left:82.4px;top:12.6px" width="7.6" height="6.2" viewBox="0 0 7.6 6.2"><path d="M0.8 0.6H6.8L3.8 5.5Z" fill="none" stroke="#444" stroke-width="1" stroke-linejoin="round"/></svg></th><th style="width:150px"><span class="t f-r" style="left:8.2px;top:10.60px;letter-spacing:-0.030px;color:#737373">Datum podání</span>
<svg class="i" style="left:132.4px;top:12.6px" width="7.6" height="6.2" viewBox="0 0 7.6 6.2"><path d="M0.8 0.6H6.8L3.8 5.5Z" fill="none" stroke="#444" stroke-width="1" stroke-linejoin="round"/></svg></th><th style="width:150px"><span class="t f-r" style="left:8.2px;top:10.60px;letter-spacing:-0.201px;color:#737373">Stav</span>
<svg class="i" style="left:132.4px;top:12.6px" width="7.6" height="6.2" viewBox="0 0 7.6 6.2"><path d="M0.8 0.6H6.8L3.8 5.5Z" fill="none" stroke="#444" stroke-width="1" stroke-linejoin="round"/></svg></th><th style="width:140px"><span class="t f-r" style="left:8.2px;top:10.60px;letter-spacing:-0.117px;color:#737373">Podepsána</span>
<svg class="i" style="left:122.4px;top:12.6px" width="7.6" height="6.2" viewBox="0 0 7.6 6.2"><path d="M0.8 0.6H6.8L3.8 5.5Z" fill="none" stroke="#444" stroke-width="1" stroke-linejoin="round"/></svg></th><th style="width:140px"><span class="t f-r" style="left:8.2px;top:10.60px;letter-spacing:0.047px;color:#737373">Listinná podoba</span>
<svg class="i" style="left:122.4px;top:12.6px" width="7.6" height="6.2" viewBox="0 0 7.6 6.2"><path d="M0.8 0.6H6.8L3.8 5.5Z" fill="none" stroke="#444" stroke-width="1" stroke-linejoin="round"/></svg></th><th style="width:180px"><span class="t f-r" style="left:8.2px;top:10.60px;letter-spacing:-0.121px;color:#737373">Označena jako nepodaná</span>
<svg class="i" style="left:162.4px;top:12.6px" width="7.6" height="6.2" viewBox="0 0 7.6 6.2"><path d="M0.8 0.6H6.8L3.8 5.5Z" fill="none" stroke="#444" stroke-width="1" stroke-linejoin="round"/></svg></th></tr></thead><tbody><tr><td><svg class="i" style="left:12.0px;top:9.5px" width="16.2" height="5.2" viewBox="0 0 16.2 5.2"><circle cx="2.25" cy="2.6" r="1.6" fill="none" stroke="#1d73b3" stroke-width="1.3"/><circle cx="8.05" cy="2.6" r="1.6" fill="none" stroke="#1d73b3" stroke-width="1.3"/><circle cx="13.85" cy="2.6" r="1.6" fill="none" stroke="#1d73b3" stroke-width="1.3"/></svg>
<svg class="i" style="left:37.8px;top:3.9px" width="16.4" height="16.4" viewBox="0 0 16.4 16.4"><circle cx="8.2" cy="8.2" r="7.5" fill="none" stroke="#1d73b3" stroke-width="1.15"/><circle cx="8" cy="4.6" r="0.85" fill="#1d73b3"/><path d="M6.8 6.95H7.95L8.2 10.4Q8.3 11.3 9.6 11.6" fill="none" stroke="#1d73b3" stroke-width="1.15" stroke-linecap="round" stroke-linejoin="round"/></svg></td><td><span class="t f-r" style="left:8.4px;top:6.60px;letter-spacing:-0.008px;color:#000">003</span></td><td><span class="t f-r" style="left:8.4px;top:6.60px;letter-spacing:0.014px;color:#000">Dodavatel - školení 2</span></td><td><span class="t f-r" style="left:8.4px;top:6.60px;letter-spacing:0.136px;color:#000">12345678</span></td><td><span class="t f-r" style="left:8.4px;top:6.60px;letter-spacing:0.085px;color:#000">20. 5. 2025 12:58</span></td><td><span class="t f-r" style="left:8.4px;top:6.60px;letter-spacing:-0.116px;color:#000">Otevřeno</span></td><td><svg class="i" style="left:66.1px;top:7.0px" width="8.6" height="8.3" viewBox="0 0 8.6 8.3"><path d="M1 1L7.6 7.3M7.6 1L1 7.3" stroke="#cb2027" stroke-width="2.1" stroke-linecap="butt"/></svg></td><td><svg class="i" style="left:66.1px;top:7.0px" width="8.6" height="8.3" viewBox="0 0 8.6 8.3"><path d="M1 1L7.6 7.3M7.6 1L1 7.3" stroke="#cb2027" stroke-width="2.1" stroke-linecap="butt"/></svg></td><td></td></tr><tr><td><svg class="i" style="left:12.0px;top:9.5px" width="16.2" height="5.2" viewBox="0 0 16.2 5.2"><circle cx="2.25" cy="2.6" r="1.6" fill="none" stroke="#1d73b3" stroke-width="1.3"/><circle cx="8.05" cy="2.6" r="1.6" fill="none" stroke="#1d73b3" stroke-width="1.3"/><circle cx="13.85" cy="2.6" r="1.6" fill="none" stroke="#1d73b3" stroke-width="1.3"/></svg>
<svg class="i" style="left:37.8px;top:3.9px" width="16.4" height="16.4" viewBox="0 0 16.4 16.4"><circle cx="8.2" cy="8.2" r="7.5" fill="none" stroke="#1d73b3" stroke-width="1.15"/><circle cx="8" cy="4.6" r="0.85" fill="#1d73b3"/><path d="M6.8 6.95H7.95L8.2 10.4Q8.3 11.3 9.6 11.6" fill="none" stroke="#1d73b3" stroke-width="1.15" stroke-linecap="round" stroke-linejoin="round"/></svg></td><td><span class="t f-r" style="left:8.4px;top:6.60px;letter-spacing:-0.008px;color:#000">002</span></td><td><span class="t f-r" style="left:8.4px;top:6.60px;letter-spacing:0.014px;color:#000">Dodavatel - školení 3</span></td><td><span class="t f-r" style="left:8.4px;top:6.60px;letter-spacing:0.136px;color:#000">12345678</span></td><td><span class="t f-r" style="left:8.4px;top:6.60px;letter-spacing:0.085px;color:#000">20. 5. 2025 12:57</span></td><td><span class="t f-r" style="left:8.4px;top:6.60px;letter-spacing:-0.116px;color:#000">Otevřeno</span></td><td><svg class="i" style="left:66.1px;top:7.0px" width="8.6" height="8.3" viewBox="0 0 8.6 8.3"><path d="M1 1L7.6 7.3M7.6 1L1 7.3" stroke="#cb2027" stroke-width="2.1" stroke-linecap="butt"/></svg></td><td><svg class="i" style="left:66.1px;top:7.0px" width="8.6" height="8.3" viewBox="0 0 8.6 8.3"><path d="M1 1L7.6 7.3M7.6 1L1 7.3" stroke="#cb2027" stroke-width="2.1" stroke-linecap="butt"/></svg></td><td></td></tr><tr><td><svg class="i" style="left:12.0px;top:9.5px" width="16.2" height="5.2" viewBox="0 0 16.2 5.2"><circle cx="2.25" cy="2.6" r="1.6" fill="none" stroke="#1d73b3" stroke-width="1.3"/><circle cx="8.05" cy="2.6" r="1.6" fill="none" stroke="#1d73b3" stroke-width="1.3"/><circle cx="13.85" cy="2.6" r="1.6" fill="none" stroke="#1d73b3" stroke-width="1.3"/></svg>
<svg class="i" style="left:37.8px;top:3.9px" width="16.4" height="16.4" viewBox="0 0 16.4 16.4"><circle cx="8.2" cy="8.2" r="7.5" fill="none" stroke="#1d73b3" stroke-width="1.15"/><circle cx="8" cy="4.6" r="0.85" fill="#1d73b3"/><path d="M6.8 6.95H7.95L8.2 10.4Q8.3 11.3 9.6 11.6" fill="none" stroke="#1d73b3" stroke-width="1.15" stroke-linecap="round" stroke-linejoin="round"/></svg></td><td><span class="t f-r" style="left:8.4px;top:6.60px;letter-spacing:-0.008px;color:#000">001</span></td><td><span class="t f-r" style="left:8.4px;top:6.60px;letter-spacing:0.014px;color:#000">Dodavatel - školení 4</span></td><td><span class="t f-r" style="left:8.4px;top:6.60px;letter-spacing:0.136px;color:#000">12345678</span></td><td><span class="t f-r" style="left:8.4px;top:6.60px;letter-spacing:0.085px;color:#000">20. 5. 2025 12:56</span></td><td><span class="t f-r" style="left:8.4px;top:6.60px;letter-spacing:-0.116px;color:#000">Otevřeno</span></td><td><svg class="i" style="left:66.1px;top:7.0px" width="8.6" height="8.3" viewBox="0 0 8.6 8.3"><path d="M1 1L7.6 7.3M7.6 1L1 7.3" stroke="#cb2027" stroke-width="2.1" stroke-linecap="butt"/></svg></td><td><svg class="i" style="left:66.1px;top:7.0px" width="8.6" height="8.3" viewBox="0 0 8.6 8.3"><path d="M1 1L7.6 7.3M7.6 1L1 7.3" stroke="#cb2027" stroke-width="2.1" stroke-linecap="butt"/></svg></td><td></td></tr></tbody></table><div class="fade"></div></div></div></div>
</section>
<section class="panel" style="top:597.0px;height:390.0px">
<h2 class="t f-h2" style="left:12.2px;top:17px;letter-spacing:-0.383px;color:#2d3947">Nabídky</h2>
<div class="a rule" style="left:0.0px;top:41.0px;width:1258.0px;height:3.0px"></div>
<label class="t f-r" style="left:401.7px;top:67px;letter-spacing:0.077px;color:#6a6a6a">Lhůta:</label>
<div class="a inp" style="left:448.0px;top:64.4px;width:223.6px;height:20.0px"><span class="t f-b" style="left:4.8px;top:4.60px;letter-spacing:0.177px;color:#000">20. 5. 2025</span>
<svg class="i" style="left:106.0px;top:3.9px" width="12.0" height="11.5" viewBox="0 0 12 11.5"><rect x="0.6" y="1.9" width="10.8" height="9" rx="1" fill="none" stroke="#8a8a8a" stroke-width="1"/><path d="M0.6 4.6H11.4M3.3 0.4V2.4M8.7 0.4V2.4" stroke="#8a8a8a" stroke-width="1" stroke-linecap="round"/></svg>
<span class="t f-b" style="left:126.8px;top:4.60px;letter-spacing:-0.355px;color:#000">13:10</span></div>
<button class="a btn dis" style="left:682.3px;top:64.4px;width:203.3px;height:20.0px"><span class="t f-r" style="left:67.2px;top:4.60px;letter-spacing:-0.028px;color:#8a8a8a">Výpočet lhůt</span></button>
<label class="t f-r" style="left:311.2px;top:108px;letter-spacing:-0.024px;color:#6a6a6a">Datum a čas otevírání:</label>
<div class="a inp" style="left:448.0px;top:105.4px;width:437.6px;height:20.0px"><svg class="i" style="left:213.0px;top:3.9px" width="12.0" height="11.5" viewBox="0 0 12 11.5"><rect x="0.6" y="1.9" width="10.8" height="9" rx="1" fill="none" stroke="#8a8a8a" stroke-width="1"/><path d="M0.6 4.6H11.4M3.3 0.4V2.4M8.7 0.4V2.4" stroke="#8a8a8a" stroke-width="1" stroke-linecap="round"/></svg></div>
<button class="a btn dis" style="left:448.0px;top:146.4px;width:437.6px;height:20.0px"><span class="t f-r" style="left:128.6px;top:4.60px;letter-spacing:-0.198px;color:#8a8a8a">Odeslání výzvy k podání nabídek</span></button>
<h3 class="t f-h3" style="left:15.3px;top:191px;letter-spacing:0.099px;color:#2d3947">Přehled podaných nabídek</h3>
<div class="frame focus" style="top:212.4px"><div class="finner"><div class="gtb" role="toolbar"><svg class="i" style="left:7.5px;top:11.2px" width="17.0" height="17.0" viewBox="0 0 17 17"><path d="M6.9 15.65H2.1Q0.95 15.65 0.95 14.5V4.3Q0.95 3.15 2.1 3.15H4.3C4.8 3.15 4.7 0.95 7 0.95C9.3 0.95 9.2 3.15 9.7 3.15H11.8Q12.95 3.15 12.95 4.3V6.5" fill="none" stroke="#1d73b3" stroke-width="1.15" stroke-linecap="round" stroke-linejoin="round"/><circle cx="7" cy="2.9" r="0.6" fill="#1d73b3"/><path d="M3.7 7.1H7M3.7 9.8H6M3.7 12.4H5.7" stroke="#1d73b3" stroke-width="1.25" stroke-linecap="butt"/><path d="M12.00 6.80L13.45 8.79L15.90 9.05L14.90 11.30L15.90 13.55L13.45 13.81L12.00 15.80L10.55 13.81L8.10 13.55L9.10 11.30L8.10 9.05L10.55 8.79Z" fill="none" stroke="#1d73b3" stroke-width="1.15" stroke-linejoin="round"/><circle cx="12.0" cy="11.3" r="1.15" fill="#1d73b3"/></svg>
<span class="t f-r" style="left:27.9px;top:14.60px;letter-spacing:-0.135px;color:#1d73b3">Evidovat nabídku</span>
<i class="sep" style="left:130.1px;top:10.8px;height:17.4px;width:1.2px;background:#1d73b3"></i>
<svg class="i" style="left:140.6px;top:11.2px" width="14.0" height="17.0" viewBox="0 0 14 17"><path d="M4.3 3.4H2.2Q1 3.4 1 4.6V14.6Q1 15.8 2.2 15.8H11.8Q13 15.8 13 14.6V4.6Q13 3.4 11.8 3.4H9.7C9.2 3.4 9.3 1 7 1C4.7 1 4.8 3.4 4.3 3.4Z" fill="none" stroke="#1d73b3" stroke-width="1.2" stroke-linejoin="round"/><circle cx="7" cy="3" r="0.65" fill="#1d73b3"/><path d="M4.1 7.3H10.3M4.1 9.85H10.3M4.1 12.4H10.3" stroke="#1d73b3" stroke-width="1.25" stroke-linecap="round"/></svg>
<span class="t f-r" style="left:159.7px;top:14.60px;letter-spacing:-0.050px;color:#1d73b3">Zadání bodových hodnot</span>
<i class="sep" style="left:305.0px;top:10.8px;height:17.4px;width:1.2px;background:#1d73b3"></i>
<button class="a gbtn" style="left:316.5px;top:6.8px;width:252.0px;height:26.0px"><svg class="i" style="left:6.9px;top:4.8px" width="17.0" height="17.0" viewBox="0 0 17 17"><path d="M6.9 15.65H2.1Q0.95 15.65 0.95 14.5V4.3Q0.95 3.15 2.1 3.15H4.3C4.8 3.15 4.7 0.95 7 0.95C9.3 0.95 9.2 3.15 9.7 3.15H11.8Q12.95 3.15 12.95 4.3V6.5" fill="none" stroke="#fff" stroke-width="1.15" stroke-linecap="round" stroke-linejoin="round"/><circle cx="7" cy="2.9" r="0.6" fill="#fff"/><path d="M3.7 7.1H7M3.7 9.8H6M3.7 12.4H5.7" stroke="#fff" stroke-width="1.25" stroke-linecap="butt"/><circle cx="11.8" cy="11.8" r="4" fill="none" stroke="#fff" stroke-width="1.15"/><path d="M9.6 11.8H13.2" stroke="#fff" stroke-width="1.15" stroke-linecap="round"/><path d="M12.2 9.9L14.3 11.8L12.2 13.7Z" fill="#fff"/></svg>
<span class="t f-gb" style="left:26.3px;top:7.80px;letter-spacing:-0.596px;color:#fff">Zpřístupnění nabídkové ceny a nákladů ŽC</span></button>
<svg class="i" style="left:587.6px;top:11.2px" width="17.0" height="17.0" viewBox="0 0 17 17"><path d="M6.9 15.65H2.1Q0.95 15.65 0.95 14.5V4.3Q0.95 3.15 2.1 3.15H4.3C4.8 3.15 4.7 0.95 7 0.95C9.3 0.95 9.2 3.15 9.7 3.15H11.8Q12.95 3.15 12.95 4.3V6.5" fill="none" stroke="#1d73b3" stroke-width="1.15" stroke-linecap="round" stroke-linejoin="round"/><circle cx="7" cy="2.9" r="0.6" fill="#1d73b3"/><path d="M3.7 7.1H7M3.7 9.8H6M3.7 12.4H5.7" stroke="#1d73b3" stroke-width="1.25" stroke-linecap="butt"/><circle cx="11.8" cy="11.8" r="4" fill="none" stroke="#1d73b3" stroke-width="1.15"/><path d="M9.6 11.8H13.2" stroke="#1d73b3" stroke-width="1.15" stroke-linecap="round"/><path d="M12.2 9.9L14.3 11.8L12.2 13.7Z" fill="#1d73b3"/></svg>
<span class="t f-r" style="left:607.7px;top:14.60px;letter-spacing:-0.102px;color:#1d73b3">Stáhnout nabídky</span>
<i class="sep" style="left:711.8px;top:10.8px;height:17.4px;width:1.2px;background:#1d73b3"></i>
<svg class="i" style="left:721.1px;top:11.3px" width="16.7" height="16.5" viewBox="0 0 16.7 16.5"><path d="M4.1 4.5V1.7Q4.1 0.7 5.1 0.7H11.8Q12.8 0.7 12.8 1.7V4.5" fill="none" stroke="#1d73b3" stroke-width="1.2"/><path d="M4.1 11.6H2.1Q0.8 11.6 0.8 10.3V6Q0.8 4.7 2.1 4.7H14.6Q15.9 4.7 15.9 6V10.3Q15.9 11.6 14.6 11.6H12.8" fill="none" stroke="#1d73b3" stroke-width="1.2"/><rect x="4.1" y="8.9" width="8.7" height="6.8" rx="0.7" fill="none" stroke="#1d73b3" stroke-width="1.2"/><path d="M2.5 6.8H4.2M5.9 10.9H11M5.9 13H10" stroke="#1d73b3" stroke-width="1.05" stroke-linecap="round"/></svg>
<svg class="i" style="left:741.6px;top:16.8px" width="7.6" height="6.2" viewBox="0 0 7.6 6.2"><path d="M0.8 0.6H6.8L3.8 5.5Z" fill="none" stroke="#1d73b3" stroke-width="1.1" stroke-linejoin="round"/></svg>
<i class="sep" style="left:759.7px;top:10.8px;height:17.4px;width:1.2px;background:#1d73b3"></i>
<svg class="i" style="left:770.8px;top:11.4px" width="13.1" height="16.3" viewBox="0 0 13.1 16.3"><path d="M2.9 5.85H1.8Q0.65 5.85 0.65 7V14.4Q0.65 15.55 1.8 15.55H11.25Q12.4 15.55 12.4 14.4V7Q12.4 5.85 11.25 5.85H10" fill="none" stroke="#1d73b3" stroke-width="1.15" stroke-linecap="round"/><path d="M6.45 8V0.7M3.8 3.4L6.45 0.7L9.1 3.4" fill="none" stroke="#1d73b3" stroke-width="1.15" stroke-linecap="round" stroke-linejoin="round"/></svg>
<svg class="i" style="left:789.5px;top:16.8px" width="7.6" height="6.2" viewBox="0 0 7.6 6.2"><path d="M0.8 0.6H6.8L3.8 5.5Z" fill="none" stroke="#1d73b3" stroke-width="1.1" stroke-linejoin="round"/></svg>
<i class="sep" style="left:807.8px;top:10.8px;height:17.4px;width:1.2px;background:#1d73b3"></i>
<svg class="i" style="left:1139.9px;top:11.9px" width="16.0" height="15.3" viewBox="0 0 16 15.3"><path d="M0.9 0.7H15.1Q15.6 0.7 15.3 1.2L9.9 8.2V13.2L6.2 14.7V8.2L0.7 1.2Q0.4 0.7 0.9 0.7Z" fill="none" stroke="#1d73b3" stroke-width="1.1" stroke-linejoin="round"/></svg>
<i class="sep" style="left:1163.0px;top:10.8px;height:17.4px;width:1.2px;background:#1d73b3"></i>
<svg class="i" style="left:1175.8px;top:16.8px" width="7.6" height="6.2" viewBox="0 0 7.6 6.2"><path d="M0.8 0.6H6.8L3.8 5.5Z" fill="none" stroke="#1d73b3" stroke-width="1.1" stroke-linejoin="round"/></svg>
<span class="t f-mw" style="left:1192.0px;top:16.60px;letter-spacing:-0.656px;color:#1d73b3">MW</span>
<i class="sep" style="left:1220.6px;top:10.8px;height:17.4px;width:1.6px;background:#1d73b3"></i></div><div class="gscroll"><table class="grid" style="width:1356px"><thead><tr><th style="width:66px"><svg class="i" style="left:24.9px;top:9.6px" width="16.0" height="16.0" viewBox="0 0 16 16"><rect x="0.6" y="0.6" width="14.8" height="14.8" rx="0.9" fill="none" stroke="#444" stroke-width="1"/><path d="M3.2 5.7H8.6M11.8 5.7H12.8M3.2 10.4H4.6M7.8 10.4H12.8" stroke="#444" stroke-width="1" stroke-linecap="round"/><circle cx="10.2" cy="5.7" r="1.45" fill="none" stroke="#444" stroke-width="1"/><circle cx="6.2" cy="10.4" r="1.45" fill="none" stroke="#444" stroke-width="1"/></svg></th><th style="width:80px"><span class="t f-b" style="left:8.4px;top:10.60px;letter-spacing:-0.799px;color:#000">Číslo</span>
<svg class="i" style="left:42.6px;top:10.2px" width="11.2" height="11.4" viewBox="0 0 11.2 11.4"><path d="M5.6 10.6V0.8M1.2 5.2L5.6 0.8L10 5.2" fill="none" stroke="#111" stroke-width="1.15" stroke-linecap="round" stroke-linejoin="round"/></svg>
<svg class="i" style="left:62.4px;top:12.6px" width="7.6" height="6.2" viewBox="0 0 7.6 6.2"><path d="M0.8 0.6H6.8L3.8 5.5Z" fill="none" stroke="#444" stroke-width="1" stroke-linejoin="round"/></svg></th><th style="width:350px"><span class="t f-r" style="left:8.2px;top:10.60px;letter-spacing:-0.109px;color:#737373">Název dodavatele</span>
<svg class="i" style="left:332.4px;top:12.6px" width="7.6" height="6.2" viewBox="0 0 7.6 6.2"><path d="M0.8 0.6H6.8L3.8 5.5Z" fill="none" stroke="#444" stroke-width="1" stroke-linejoin="round"/></svg></th><th style="width:100px"><span class="t f-r" style="left:8.2px;top:10.60px;letter-spacing:-1.495px;color:#737373">IČO</span>
<svg class="i" style="left:82.4px;top:12.6px" width="7.6" height="6.2" viewBox="0 0 7.6 6.2"><path d="M0.8 0.6H6.8L3.8 5.5Z" fill="none" stroke="#444" stroke-width="1" stroke-linejoin="round"/></svg></th><th style="width:150px"><span class="t f-r" style="left:8.2px;top:10.60px;letter-spacing:-0.030px;color:#737373">Datum podání</span>
<svg class="i" style="left:132.4px;top:12.6px" width="7.6" height="6.2" viewBox="0 0 7.6 6.2"><path d="M0.8 0.6H6.8L3.8 5.5Z" fill="none" stroke="#444" stroke-width="1" stroke-linejoin="round"/></svg></th><th style="width:150px"><span class="t f-r" style="left:8.2px;top:10.60px;letter-spacing:-0.201px;color:#737373">Stav</span>
<svg class="i" style="left:132.4px;top:12.6px" width="7.6" height="6.2" viewBox="0 0 7.6 6.2"><path d="M0.8 0.6H6.8L3.8 5.5Z" fill="none" stroke="#444" stroke-width="1" stroke-linejoin="round"/></svg></th><th style="width:180px"><span class="t f-r" style="left:8.2px;top:10.60px;letter-spacing:-0.121px;color:#737373">Označena jako nepodaná</span>
<svg class="i" style="left:162.4px;top:12.6px" width="7.6" height="6.2" viewBox="0 0 7.6 6.2"><path d="M0.8 0.6H6.8L3.8 5.5Z" fill="none" stroke="#444" stroke-width="1" stroke-linejoin="round"/></svg></th><th style="width:140px"><span class="t f-r" style="left:8.2px;top:10.60px;letter-spacing:-0.096px;color:#737373">Podaná po lhůtě</span>
<svg class="i" style="left:122.4px;top:12.6px" width="7.6" height="6.2" viewBox="0 0 7.6 6.2"><path d="M0.8 0.6H6.8L3.8 5.5Z" fill="none" stroke="#444" stroke-width="1" stroke-linejoin="round"/></svg></th><th style="width:140px"><span class="t f-r" style="left:8.2px;top:10.60px;letter-spacing:-0.117px;color:#737373">Podepsána</span>
<svg class="i" style="left:122.4px;top:12.6px" width="7.6" height="6.2" viewBox="0 0 7.6 6.2"><path d="M0.8 0.6H6.8L3.8 5.5Z" fill="none" stroke="#444" stroke-width="1" stroke-linejoin="round"/></svg></th></tr></thead><tbody><tr><td><svg class="i" style="left:12.0px;top:9.5px" width="16.2" height="5.2" viewBox="0 0 16.2 5.2"><circle cx="2.25" cy="2.6" r="1.6" fill="none" stroke="#1d73b3" stroke-width="1.3"/><circle cx="8.05" cy="2.6" r="1.6" fill="none" stroke="#1d73b3" stroke-width="1.3"/><circle cx="13.85" cy="2.6" r="1.6" fill="none" stroke="#1d73b3" stroke-width="1.3"/></svg>
<svg class="i" style="left:37.8px;top:3.9px" width="16.4" height="16.4" viewBox="0 0 16.4 16.4"><circle cx="8.2" cy="8.2" r="7.5" fill="none" stroke="#1d73b3" stroke-width="1.15"/><circle cx="8" cy="4.6" r="0.85" fill="#1d73b3"/><path d="M6.8 6.95H7.95L8.2 10.4Q8.3 11.3 9.6 11.6" fill="none" stroke="#1d73b3" stroke-width="1.15" stroke-linecap="round" stroke-linejoin="round"/></svg></td><td><span class="t f-r" style="left:8.4px;top:6.60px;letter-spacing:-0.008px;color:#000">001</span></td><td><span class="t f-r" style="left:8.4px;top:6.60px;letter-spacing:0.014px;color:#000">Dodavatel - školení 2</span></td><td><span class="t f-r" style="left:8.4px;top:6.60px;letter-spacing:0.136px;color:#000">12345678</span></td><td><span class="t f-r" style="left:8.4px;top:6.60px;letter-spacing:0.085px;color:#000">20. 5. 2025 13:07</span></td><td><span class="t f-r" style="left:8.4px;top:6.60px;letter-spacing:-0.116px;color:#000">Otevřeno</span></td><td><svg class="i" style="left:86.1px;top:6.9px" width="8.6" height="8.3" viewBox="0 0 8.6 8.3"><path d="M1 1L7.6 7.3M7.6 1L1 7.3" stroke="#cb2027" stroke-width="2.1" stroke-linecap="butt"/></svg></td><td><svg class="i" style="left:66.1px;top:6.9px" width="8.6" height="8.3" viewBox="0 0 8.6 8.3"><path d="M1 1L7.6 7.3M7.6 1L1 7.3" stroke="#cb2027" stroke-width="2.1" stroke-linecap="butt"/></svg></td><td></td></tr><tr><td><svg class="i" style="left:12.0px;top:9.5px" width="16.2" height="5.2" viewBox="0 0 16.2 5.2"><circle cx="2.25" cy="2.6" r="1.6" fill="none" stroke="#1d73b3" stroke-width="1.3"/><circle cx="8.05" cy="2.6" r="1.6" fill="none" stroke="#1d73b3" stroke-width="1.3"/><circle cx="13.85" cy="2.6" r="1.6" fill="none" stroke="#1d73b3" stroke-width="1.3"/></svg>
<svg class="i" style="left:37.8px;top:3.9px" width="16.4" height="16.4" viewBox="0 0 16.4 16.4"><circle cx="8.2" cy="8.2" r="7.5" fill="none" stroke="#1d73b3" stroke-width="1.15"/><circle cx="8" cy="4.6" r="0.85" fill="#1d73b3"/><path d="M6.8 6.95H7.95L8.2 10.4Q8.3 11.3 9.6 11.6" fill="none" stroke="#1d73b3" stroke-width="1.15" stroke-linecap="round" stroke-linejoin="round"/></svg></td><td><span class="t f-r" style="left:8.4px;top:6.60px;letter-spacing:-0.008px;color:#000">002</span></td><td><span class="t f-r" style="left:8.4px;top:6.60px;letter-spacing:0.014px;color:#000">Dodavatel - školení 3</span></td><td><span class="t f-r" style="left:8.4px;top:6.60px;letter-spacing:0.136px;color:#000">12345678</span></td><td><span class="t f-r" style="left:8.4px;top:6.60px;letter-spacing:0.085px;color:#000">20. 5. 2025 13:08</span></td><td><span class="t f-r" style="left:8.4px;top:6.60px;letter-spacing:-0.116px;color:#000">Otevřeno</span></td><td><svg class="i" style="left:86.1px;top:6.9px" width="8.6" height="8.3" viewBox="0 0 8.6 8.3"><path d="M1 1L7.6 7.3M7.6 1L1 7.3" stroke="#cb2027" stroke-width="2.1" stroke-linecap="butt"/></svg></td><td><svg class="i" style="left:66.1px;top:6.9px" width="8.6" height="8.3" viewBox="0 0 8.6 8.3"><path d="M1 1L7.6 7.3M7.6 1L1 7.3" stroke="#cb2027" stroke-width="2.1" stroke-linecap="butt"/></svg></td><td></td></tr><tr><td><svg class="i" style="left:12.0px;top:9.5px" width="16.2" height="5.2" viewBox="0 0 16.2 5.2"><circle cx="2.25" cy="2.6" r="1.6" fill="none" stroke="#1d73b3" stroke-width="1.3"/><circle cx="8.05" cy="2.6" r="1.6" fill="none" stroke="#1d73b3" stroke-width="1.3"/><circle cx="13.85" cy="2.6" r="1.6" fill="none" stroke="#1d73b3" stroke-width="1.3"/></svg>
<svg class="i" style="left:37.8px;top:3.9px" width="16.4" height="16.4" viewBox="0 0 16.4 16.4"><circle cx="8.2" cy="8.2" r="7.5" fill="none" stroke="#1d73b3" stroke-width="1.15"/><circle cx="8" cy="4.6" r="0.85" fill="#1d73b3"/><path d="M6.8 6.95H7.95L8.2 10.4Q8.3 11.3 9.6 11.6" fill="none" stroke="#1d73b3" stroke-width="1.15" stroke-linecap="round" stroke-linejoin="round"/></svg></td><td><span class="t f-r" style="left:8.4px;top:6.60px;letter-spacing:-0.008px;color:#000">003</span></td><td><span class="t f-r" style="left:8.4px;top:6.60px;letter-spacing:0.014px;color:#000">Dodavatel - školení 4</span></td><td><span class="t f-r" style="left:8.4px;top:6.60px;letter-spacing:0.136px;color:#000">12345678</span></td><td><span class="t f-r" style="left:8.4px;top:6.60px;letter-spacing:0.085px;color:#000">20. 5. 2025 13:09</span></td><td><span class="t f-r" style="left:8.4px;top:6.60px;letter-spacing:-0.116px;color:#000">Otevřeno</span></td><td><svg class="i" style="left:86.1px;top:6.9px" width="8.6" height="8.3" viewBox="0 0 8.6 8.3"><path d="M1 1L7.6 7.3M7.6 1L1 7.3" stroke="#cb2027" stroke-width="2.1" stroke-linecap="butt"/></svg></td><td><svg class="i" style="left:66.1px;top:6.9px" width="8.6" height="8.3" viewBox="0 0 8.6 8.3"><path d="M1 1L7.6 7.3M7.6 1L1 7.3" stroke="#cb2027" stroke-width="2.1" stroke-linecap="butt"/></svg></td><td></td></tr></tbody></table><div class="fade"></div></div></div></div>
<div class="a mark" style="left:322.2px;top:213.0px;width:267.8px;height:41.6px"></div>
</section>
</main>
</body>
</html>
